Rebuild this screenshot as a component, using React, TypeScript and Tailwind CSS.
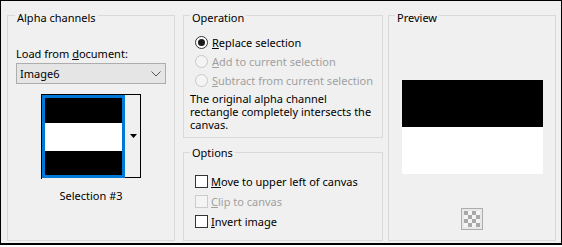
import type React from 'react'

function GroupBox({
  title,
  className,
  titleClass,
  children,
}: {
  title: string
  className: string
  titleClass: string
  children?: React.ReactNode
}): JSX.Element {
  return (
    <div className={`relative border border-[#d9d9d9] ${className}`}>
      <span className={`absolute bg-[#f0f0f0] px-[2px] text-black ${titleClass}`}>{title}</span>
      {children}
    </div>
  )
}

function Radio({ checked, disabled }: { checked?: boolean; disabled?: boolean }): JSX.Element {
  return (
    <span
      className={`flex h-[13px] w-[13px] shrink-0 items-center justify-center rounded-full border ${
        disabled ? 'border-[#c8c8c8] bg-[#f4f4f4]' : 'border-[#333333] bg-white'
      }`}
    >
      {checked && <span className="h-[7px] w-[7px] rounded-full bg-[#1a1a1a]" />}
    </span>
  )
}

function Check({ disabled }: { disabled?: boolean }): JSX.Element {
  return (
    <span
      className={`h-[13px] w-[13px] shrink-0 border ${
        disabled ? 'border-[#cccccc] bg-[#f4f4f4]' : 'border-[#333333] bg-white'
      }`}
    />
  )
}

export default function App(): JSX.Element {
  return (
    <div className="h-[247px] w-[562px] whitespace-nowrap bg-white font-['Noto_Sans','DejaVu_Sans',sans-serif] text-[11px] leading-[15px] text-black">
      <div className="flex h-[245px] border border-b-2 border-black bg-[#f0f0f0] pl-[6px] pt-[14px]">
        {/* Alpha channels */}
        <GroupBox title="Alpha channels" className="h-[226px] w-[168px]" titleClass="left-[7px] top-[-6px]">
          <div className="flex flex-col pl-[8px] pt-[30px]">
            <div>
              Load from <u>d</u>ocument:
            </div>
            <div className="mt-[2px] flex h-[21px] w-[150px] items-center justify-between border border-[#adadad] bg-[#e5e5e5] pl-[3px] pr-[3px]">
              <span>Image6</span>
              <svg width="10" height="6" viewBox="0 0 10 6" className="mr-[1px]">
                <polyline points="0.5,0.5 5,5 9.5,0.5" fill="none" stroke="#555" strokeWidth="1" />
              </svg>
            </div>
            <div className="ml-[25px] mt-[10px] flex h-[85px] w-[100px] border-l border-t border-black">
              <div className="flex h-[83px] w-[83px] flex-col border-[3px] border-[#0078d7]">
                <div className="h-[25px] bg-black" />
                <div className="h-[28px] bg-white" />
                <div className="flex-1 bg-black" />
              </div>
              <div className="flex h-[83px] w-[16px] items-center justify-center border-b border-r border-black bg-[#f0f0f0] pl-[1px]">
                <svg width="7" height="4" viewBox="0 0 7 4">
                  <polygon points="0,0 7,0 3.5,4" fill="#000" />
                </svg>
              </div>
            </div>
            <div className="mt-[9px] w-[150px] text-center">Selection #3</div>
          </div>
        </GroupBox>

        {/* Operation + Options */}
        <div className="ml-[8px] flex w-[200px] flex-col">
          <GroupBox title="Operation" className="h-[123px]" titleClass="left-[6px] top-[-6px]">
            <div className="flex flex-col pl-[11px] pt-[16px]">
              <div className="flex h-[20px] items-center gap-[4px]">
                <Radio checked />
                <span>
                  <u>R</u>eplace selection
                </span>
              </div>
              <div className="flex h-[19px] items-center gap-[4px] text-[#a0a0a0]">
                <Radio disabled />
                <span>
                  <u>A</u>dd to current selection
                </span>
              </div>
              <div className="flex h-[19px] items-center gap-[4px] text-[#a0a0a0]">
                <Radio disabled />
                <span>
                  <u>S</u>ubtract from current selection
                </span>
              </div>
            </div>
            <div className="pl-[6px] pt-[2px] leading-[13px]">
              The original alpha channel
              <br />
              rectangle completely intersects the
              <br />
              canvas.
            </div>
          </GroupBox>
          <GroupBox title="Options" className="mt-[14px] h-[89px]" titleClass="left-[6px] top-[-8px]">
            <div className="flex flex-col pl-[11px] pt-[18px]">
              <div className="flex h-[20px] items-center gap-[3px]">
                <Check />
                <span>
                  <u>M</u>ove to upper left of canvas
                </span>
              </div>
              <div className="flex h-[20px] items-center gap-[3px] text-[#a0a0a0]">
                <Check disabled />
                <span>
                  <u>C</u>lip to canvas
                </span>
              </div>
              <div className="flex h-[20px] items-center gap-[3px]">
                <Check />
                <span>
                  <u>I</u>nvert image
                </span>
              </div>
            </div>
          </GroupBox>
        </div>

        {/* Preview */}
        <GroupBox title="Preview" className="ml-[5px] h-[226px] w-[168px]" titleClass="left-[6px] top-[-6px]">
          <div className="flex flex-col items-center pt-[64px]">
            <div className="flex h-[94px] w-[141px] flex-col">
              <div className="h-[47px] bg-black" />
              <div className="h-[47px] bg-white" />
            </div>
            <div className="mt-[34px] flex h-[22px] w-[22px] items-center justify-center border border-[#adadad] bg-[#e8e8e8]">
              <svg width="16" height="16" viewBox="0 0 16 16">
                <rect width="16" height="16" fill="#f4f4f4" />
                <rect x="0" y="0" width="4" height="4" fill="#a8a8a8" />
                <rect x="8" y="0" width="4" height="4" fill="#a8a8a8" />
                <rect x="4" y="4" width="4" height="4" fill="#a8a8a8" />
                <rect x="12" y="4" width="4" height="4" fill="#a8a8a8" />
                <rect x="0" y="8" width="4" height="4" fill="#a8a8a8" />
                <rect x="8" y="8" width="4" height="4" fill="#a8a8a8" />
                <rect x="4" y="12" width="4" height="4" fill="#a8a8a8" />
                <rect x="12" y="12" width="4" height="4" fill="#a8a8a8" />
              </svg>
            </div>
          </div>
        </GroupBox>
      </div>
    </div>
  )
}
